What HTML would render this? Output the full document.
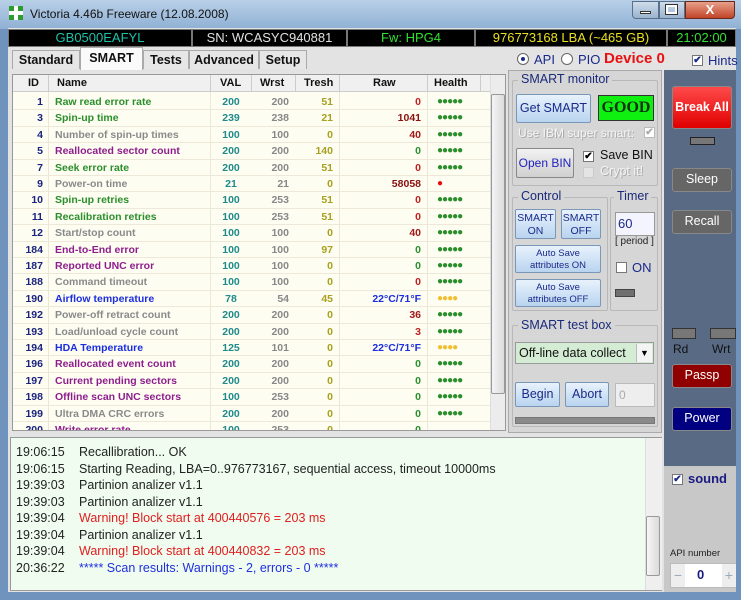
<!DOCTYPE html>
<html><head><meta charset="utf-8"><style>
*{margin:0;padding:0;box-sizing:border-box}
body{width:741px;height:600px;overflow:hidden;background:#6f93bd;font-family:"Liberation Sans",sans-serif;position:relative}
.a{position:absolute}
.title{left:0;top:0;width:741px;height:29px;background:linear-gradient(#b9d0e8,#8fb0d4)}
.client{left:8px;top:28px;width:728px;height:564px;background:#e3e3e3}
.info{top:29px;height:18px;background:#000;border:1px solid #777;font-size:13px;text-align:center;line-height:16px}
.tab{top:50px;height:19px;background:#e6e6e6;border:1px solid #aaa;border-bottom:none;font-size:12.5px;font-weight:bold;text-align:center;line-height:18px;color:#111}
.tbl{left:12px;top:74px;width:494px;height:357px;background:#fdfdf2;border:1px solid #999;overflow:hidden}
.row{position:absolute;left:0;width:478px;height:16.4px;font-size:10.5px;font-weight:bold;line-height:16px;border-bottom:1px solid #eee8d8}
.row span{position:absolute;top:0}
.id{right:448px;color:#1a237e}
.nm{left:42px}
.val{left:196px;width:44px;text-align:center;color:#1f8a8a}
.wr{right:202px;color:#888}
.tr{right:158px;color:#a8a020}
.rw{right:70px}
.hl{left:424px;letter-spacing:-1px;font-size:10px}
.g{color:#2a8f2a}.gy{color:#8a8a8a}.p{color:#8e1e8e}.b{color:#1c2ee0}
.btn{background:linear-gradient(#e8f2fc,#b9d4ef);border:1px solid #7a97b8;border-radius:2px;text-align:center;color:#1a2a8a;font-size:12px;white-space:nowrap}
.grp{border:1px solid #b8b8b8;border-radius:2px}
.gl{background:#d6d6d6;color:#1a2a7a;font-size:12.5px;padding:0 3px}
.dk{border:1px solid #888;border-radius:3px;color:#fff;text-align:center;font-size:12.5px;line-height:21px}
.log{left:10px;top:437px;width:652px;height:154px;background:#effcef;border:1px solid #999;font-size:12.5px;color:#222}
.log div{position:absolute;left:5px;height:16px;white-space:nowrap}
.log i{font-style:normal;position:absolute;left:63px}
.cb{width:11px;height:11px;background:#fff;border:1px solid #777;font-size:10px;line-height:9px;color:#1a2a8a;text-align:center;font-weight:bold}
</style></head><body>
<div class="a title"></div>
<div class="a" style="left:9px;top:6px;width:14px;height:14px;background:#2e9b2e"></div>
<div class="a" style="left:14px;top:6px;width:4px;height:14px;background:#fff"></div>
<div class="a" style="left:9px;top:11px;width:14px;height:4px;background:#fff"></div>
<div class="a" style="left:30px;top:7px;font-size:12px;color:#111">Victoria 4.46b Freeware (12.08.2008)</div>
<div class="a" style="left:632px;top:1px;width:27px;height:18px;background:linear-gradient(#cfdcea,#9bb3cf);border:1px solid #5a6f8a;border-radius:0 0 0 4px"></div>
<div class="a" style="left:640px;top:11px;width:11px;height:3px;background:#fff;border:1px solid #333"></div>
<div class="a" style="left:659px;top:1px;width:26px;height:18px;background:linear-gradient(#cfdcea,#9bb3cf);border:1px solid #5a6f8a"></div>
<div class="a" style="left:666px;top:5px;width:11px;height:9px;border:2px solid #fff;outline:1px solid #333"></div>
<div class="a" style="left:685px;top:1px;width:50px;height:18px;background:linear-gradient(#e8a08a,#c04428);border:1px solid #6a2a1a;border-radius:0 0 4px 0;color:#fff;font-weight:bold;text-align:center;font-size:13px;line-height:16px">X</div>
<div class="a client"></div>
<div class="a info" style="left:8px;width:184px;color:#1bc2a8">GB0500EAFYL</div>
<div class="a info" style="left:192px;width:155px;color:#e0e0e0">SN: WCASYC940881</div>
<div class="a info" style="left:347px;width:128px;color:#30e030">Fw: HPG4</div>
<div class="a info" style="left:475px;width:192px;color:#e8e020">976773168 LBA (~465 GB)</div>
<div class="a info" style="left:667px;width:69px;color:#30e030">21:02:00</div>
<div class="a tab" style="left:12px;width:68px">Standard</div>
<div class="a tab" style="left:80px;top:47px;height:23px;width:63px;background:#fafafa;line-height:21px">SMART</div>
<div class="a tab" style="left:143px;width:46px">Tests</div>
<div class="a tab" style="left:189px;width:70px">Advanced</div>
<div class="a tab" style="left:259px;width:48px">Setup</div>
<div class="a" style="left:517px;top:53px;width:12px;height:12px;border-radius:50%;border:1px solid #666;background:#fff"></div>
<div class="a" style="left:521px;top:57px;width:4px;height:4px;border-radius:50%;background:#1a2a8a"></div>
<div class="a" style="left:534px;top:52px;font-size:13px;color:#1a2a8a">API</div>
<div class="a" style="left:561px;top:53px;width:12px;height:12px;border-radius:50%;border:1px solid #666;background:#fff"></div>
<div class="a" style="left:578px;top:52px;font-size:13px;color:#1a2a8a">PIO</div>
<div class="a" style="left:604px;top:50px;font-size:15px;font-weight:bold;color:#e81010">Device 0</div>
<div class="a cb" style="left:692px;top:55px">✔</div>
<div class="a" style="left:708px;top:53px;font-size:13px;color:#1a2a8a">Hints</div>

<div class="a tbl">
<div class="a" style="left:0;top:0;width:478px;height:17px;background:#f0f0f0;border-bottom:1px solid #ccc;font-size:11px;font-weight:bold;line-height:16px;color:#111">
<span class="a" style="left:15px">ID</span><span class="a" style="left:44px">Name</span><span class="a" style="left:207px">VAL</span><span class="a" style="left:247px">Wrst</span><span class="a" style="left:291px">Tresh</span><span class="a" style="left:360px">Raw</span><span class="a" style="left:421px">Health</span>
<div class="a" style="left:35px;top:0;width:1px;height:17px;background:#ccc"></div><div class="a" style="left:197px;top:0;width:1px;height:17px;background:#ccc"></div><div class="a" style="left:238px;top:0;width:1px;height:17px;background:#ccc"></div><div class="a" style="left:282px;top:0;width:1px;height:17px;background:#ccc"></div><div class="a" style="left:326px;top:0;width:1px;height:17px;background:#ccc"></div><div class="a" style="left:414px;top:0;width:1px;height:17px;background:#ccc"></div><div class="a" style="left:467px;top:0;width:1px;height:17px;background:#ccc"></div>
</div>
<div class="a" style="left:35px;top:17px;width:1px;height:340px;background:#eee6d4"></div>
<div class="a" style="left:197px;top:17px;width:1px;height:340px;background:#eee6d4"></div>
<div class="a" style="left:326px;top:17px;width:1px;height:340px;background:#eee6d4"></div>
<div class="a" style="left:414px;top:17px;width:1px;height:340px;background:#eee6d4"></div>
<div class="row" style="top:19px"><span class="id">1</span><span class="nm g">Raw read error rate</span><span class="val">200</span><span class="wr">200</span><span class="tr">51</span><span class="rw" style="color:#c02020">0</span><span class="hl g">●●●●●</span></div>
<div class="row" style="top:35.4px"><span class="id">3</span><span class="nm g">Spin-up time</span><span class="val">239</span><span class="wr">238</span><span class="tr">21</span><span class="rw" style="color:#8b1010">1041</span><span class="hl g">●●●●●</span></div>
<div class="row" style="top:51.8px"><span class="id">4</span><span class="nm gy">Number of spin-up times</span><span class="val">100</span><span class="wr">100</span><span class="tr">0</span><span class="rw" style="color:#a01818">40</span><span class="hl g">●●●●●</span></div>
<div class="row" style="top:68.2px"><span class="id">5</span><span class="nm p">Reallocated sector count</span><span class="val">200</span><span class="wr">200</span><span class="tr">140</span><span class="rw g">0</span><span class="hl g">●●●●●</span></div>
<div class="row" style="top:84.6px"><span class="id">7</span><span class="nm g">Seek error rate</span><span class="val">200</span><span class="wr">200</span><span class="tr">51</span><span class="rw" style="color:#c02020">0</span><span class="hl g">●●●●●</span></div>
<div class="row" style="top:101px"><span class="id">9</span><span class="nm gy">Power-on time</span><span class="val">21</span><span class="wr">21</span><span class="tr">0</span><span class="rw" style="color:#8b1010">58058</span><span class="hl" style="color:#e01010">●</span></div>
<div class="row" style="top:117.4px"><span class="id">10</span><span class="nm g">Spin-up retries</span><span class="val">100</span><span class="wr">253</span><span class="tr">51</span><span class="rw" style="color:#c02020">0</span><span class="hl g">●●●●●</span></div>
<div class="row" style="top:133.8px"><span class="id">11</span><span class="nm g">Recalibration retries</span><span class="val">100</span><span class="wr">253</span><span class="tr">51</span><span class="rw" style="color:#c02020">0</span><span class="hl g">●●●●●</span></div>
<div class="row" style="top:150.2px"><span class="id">12</span><span class="nm gy">Start/stop count</span><span class="val">100</span><span class="wr">100</span><span class="tr">0</span><span class="rw" style="color:#a01818">40</span><span class="hl g">●●●●●</span></div>
<div class="row" style="top:166.6px"><span class="id">184</span><span class="nm p">End-to-End error</span><span class="val">100</span><span class="wr">100</span><span class="tr">97</span><span class="rw g">0</span><span class="hl g">●●●●●</span></div>
<div class="row" style="top:183px"><span class="id">187</span><span class="nm p">Reported UNC error</span><span class="val">100</span><span class="wr">100</span><span class="tr">0</span><span class="rw g">0</span><span class="hl g">●●●●●</span></div>
<div class="row" style="top:199.4px"><span class="id">188</span><span class="nm gy">Command timeout</span><span class="val">100</span><span class="wr">100</span><span class="tr">0</span><span class="rw" style="color:#c02020">0</span><span class="hl g">●●●●●</span></div>
<div class="row" style="top:215.8px"><span class="id">190</span><span class="nm b">Airflow temperature</span><span class="val">78</span><span class="wr">54</span><span class="tr">45</span><span class="rw b">22°C/71°F</span><span class="hl" style="color:#f0c030">●●●●</span></div>
<div class="row" style="top:232.2px"><span class="id">192</span><span class="nm gy">Power-off retract count</span><span class="val">200</span><span class="wr">200</span><span class="tr">0</span><span class="rw" style="color:#a01818">36</span><span class="hl g">●●●●●</span></div>
<div class="row" style="top:248.6px"><span class="id">193</span><span class="nm gy">Load/unload cycle count</span><span class="val">200</span><span class="wr">200</span><span class="tr">0</span><span class="rw" style="color:#c02020">3</span><span class="hl g">●●●●●</span></div>
<div class="row" style="top:265px"><span class="id">194</span><span class="nm b">HDA Temperature</span><span class="val">125</span><span class="wr">101</span><span class="tr">0</span><span class="rw b">22°C/71°F</span><span class="hl" style="color:#f0c030">●●●●</span></div>
<div class="row" style="top:281.4px"><span class="id">196</span><span class="nm p">Reallocated event count</span><span class="val">200</span><span class="wr">200</span><span class="tr">0</span><span class="rw g">0</span><span class="hl g">●●●●●</span></div>
<div class="row" style="top:297.8px"><span class="id">197</span><span class="nm p">Current pending sectors</span><span class="val">200</span><span class="wr">200</span><span class="tr">0</span><span class="rw g">0</span><span class="hl g">●●●●●</span></div>
<div class="row" style="top:314.2px"><span class="id">198</span><span class="nm p">Offline scan UNC sectors</span><span class="val">100</span><span class="wr">253</span><span class="tr">0</span><span class="rw g">0</span><span class="hl g">●●●●●</span></div>
<div class="row" style="top:330.6px"><span class="id">199</span><span class="nm gy">Ultra DMA CRC errors</span><span class="val">200</span><span class="wr">200</span><span class="tr">0</span><span class="rw g">0</span><span class="hl g">●●●●●</span></div>
<div class="row" style="top:347px"><span class="id">200</span><span class="nm p">Write error rate</span><span class="val">100</span><span class="wr">253</span><span class="tr">0</span><span class="rw g">0</span></div>
<div class="a" style="left:477px;top:0;width:16px;height:357px;background:#ececec;border-left:1px solid #ddd"></div>
<div class="a" style="left:478px;top:19px;width:14px;height:300px;background:linear-gradient(90deg,#f4f4f4,#dcdcdc);border:1px solid #999;border-radius:2px"></div>
</div>

<div class="a" style="left:508px;top:70px;width:154px;height:363px;background:#d6d6d6;border:1px solid #aaa"></div>
<div class="a grp" style="left:512px;top:80px;width:146px;height:106px"></div>
<div class="a gl" style="left:518px;top:72px">SMART monitor</div>
<div class="a btn" style="left:516px;top:94px;width:75px;height:29px;line-height:27px;font-size:12.5px">Get SMART</div>
<div class="a" style="left:598px;top:95px;width:56px;height:26px;background:#10f010;border:1px solid #333;text-align:center;font:bold 16px/24px 'Liberation Serif',serif;color:#103010">GOOD</div>
<div class="a" style="left:518px;top:126px;font-size:12px;color:#f4f4f4;text-shadow:1px 1px #aaa">Use IBM super smart:</div>
<div class="a cb" style="left:644px;top:127px;color:#aaa;border-color:#bbb">✔</div>
<div class="a btn" style="left:516px;top:148px;width:58px;height:30px;line-height:28px;font-size:12px;background:linear-gradient(#f2f2f2,#d0d0d0);border-color:#888;color:#2020c0">Open BIN</div>
<div class="a cb" style="left:583px;top:151px;color:#000">✔</div>
<div class="a" style="left:600px;top:148px;font-size:12.5px;color:#111">Save BIN</div>
<div class="a cb" style="left:583px;top:167px;border-color:#ccc;background:#e4e4e4"></div>
<div class="a" style="left:600px;top:164px;font-size:12.5px;color:#f4f4f4;text-shadow:1px 1px #aaa">Crypt it!</div>
<div class="a grp" style="left:512px;top:197px;width:96px;height:114px"></div>
<div class="a gl" style="left:518px;top:189px">Control</div>
<div class="a grp" style="left:610px;top:197px;width:48px;height:114px"></div>
<div class="a gl" style="left:614px;top:189px">Timer</div>
<div class="a btn" style="left:515px;top:209px;width:41px;height:30px;font-size:10.5px;line-height:13px;padding-top:2px">SMART<br>ON</div>
<div class="a btn" style="left:561px;top:209px;width:40px;height:30px;font-size:10.5px;line-height:13px;padding-top:2px">SMART<br>OFF</div>
<div class="a btn" style="left:515px;top:245px;width:86px;height:28px;font-size:9.5px;line-height:12px;padding-top:2px">Auto Save<br>attributes ON</div>
<div class="a btn" style="left:515px;top:279px;width:86px;height:28px;font-size:9.5px;line-height:12px;padding-top:2px">Auto Save<br>attributes OFF</div>
<div class="a" style="left:615px;top:212px;width:40px;height:24px;background:#f4f4ff;border:1px solid #999;font-size:13px;line-height:22px;padding-left:2px;color:#1a2a8a">60</div>
<div class="a" style="left:615px;top:236px;font-size:10px;color:#222">[ period ]</div>
<div class="a cb" style="left:616px;top:262px"></div>
<div class="a" style="left:632px;top:260px;font-size:13px;color:#1a2a8a">ON</div>
<div class="a" style="left:615px;top:289px;width:20px;height:8px;background:#707070;border:1px solid #444"></div>
<div class="a grp" style="left:512px;top:325px;width:146px;height:102px"></div>
<div class="a gl" style="left:518px;top:318px">SMART test box</div>
<div class="a" style="left:515px;top:342px;width:139px;height:22px;background:#d4ecd4;border:1px solid #999;font-size:12.5px;line-height:20px;padding-left:3px;color:#111">Off-line data collect</div>
<div class="a" style="left:636px;top:344px;width:16px;height:18px;background:#f4f4f4;border-left:1px solid #bbb;font-size:9px;text-align:center;line-height:18px">▼</div>
<div class="a btn" style="left:515px;top:382px;width:45px;height:25px;line-height:23px;font-size:12.5px">Begin</div>
<div class="a btn" style="left:565px;top:382px;width:44px;height:25px;line-height:23px;font-size:12.5px">Abort</div>
<div class="a" style="left:615px;top:383px;width:40px;height:24px;background:#eee;border:1px solid #bbb;font-size:12px;line-height:22px;padding-left:3px;color:#aaa">0</div>
<div class="a" style="left:515px;top:417px;width:140px;height:7px;background:#8a8a8a;border:1px solid #777"></div>

<div class="a" style="left:664px;top:70px;width:72px;height:396px;background:#586a84"></div>
<div class="a dk" style="left:672px;top:86px;width:60px;height:43px;background:linear-gradient(#ff4a4a,#e00000);line-height:41px;font-weight:bold;font-size:12.5px">Break All</div>
<div class="a" style="left:690px;top:137px;width:25px;height:8px;background:#777;border:1px solid #222"></div>
<div class="a dk" style="left:672px;top:168px;width:60px;height:24px;background:#666">Sleep</div>
<div class="a dk" style="left:672px;top:210px;width:60px;height:24px;background:#666">Recall</div>
<div class="a" style="left:672px;top:328px;width:24px;height:11px;background:#777;border:1px solid #333"></div>
<div class="a" style="left:710px;top:328px;width:26px;height:11px;background:#777;border:1px solid #333"></div>
<div class="a" style="left:673px;top:342px;font-size:12px;color:#111">Rd</div>
<div class="a" style="left:712px;top:342px;font-size:12px;color:#111">Wrt</div>
<div class="a dk" style="left:672px;top:364px;width:60px;height:24px;background:#900000">Passp</div>
<div class="a dk" style="left:672px;top:407px;width:60px;height:24px;background:#000080">Power</div>
<div class="a" style="left:664px;top:466px;width:72px;height:126px;background:#c8c8c8"></div>
<div class="a cb" style="left:672px;top:474px">✔</div>
<div class="a" style="left:688px;top:471px;font-size:13px;font-weight:bold;color:#1a1a80">sound</div>
<div class="a" style="left:670px;top:548px;font-size:9.5px;color:#222">API number</div>
<div class="a" style="left:670px;top:563px;width:66px;height:25px;background:#fff;border:1px solid #bbb"></div>
<div class="a" style="left:671px;top:564px;width:14px;height:23px;background:#eee;color:#9ab;text-align:center;font-size:14px;line-height:22px">−</div>
<div class="a" style="left:697px;top:567px;font-size:13px;font-weight:bold;color:#1a1a80">0</div>
<div class="a" style="left:722px;top:564px;width:14px;height:23px;background:#eee;color:#9ab;text-align:center;font-size:14px;line-height:22px">+</div>

<div class="a log">
<div style="top:7px">19:06:15<i>Recallibration... OK</i></div>
<div style="top:23.5px">19:06:15<i>Starting Reading, LBA=0..976773167, sequential access, timeout 10000ms</i></div>
<div style="top:40px">19:39:03<i>Partinion analizer v1.1</i></div>
<div style="top:56.5px">19:39:03<i>Partinion analizer v1.1</i></div>
<div style="top:73px">19:39:04<i style="color:#e02020">Warning! Block start at 400440576 = 203 ms</i></div>
<div style="top:89.5px">19:39:04<i>Partinion analizer v1.1</i></div>
<div style="top:106px">19:39:04<i style="color:#e02020">Warning! Block start at 400440832 = 203 ms</i></div>
<div style="top:122.5px">20:36:22<i style="color:#2030e0">***** Scan results: Warnings - 2, errors - 0 *****</i></div>
<div style="left:634px;top:0;width:17px;height:152px;background:#efefef;border-left:1px solid #ddd"></div>
<div style="left:635px;top:78px;width:14px;height:60px;background:linear-gradient(90deg,#f6f6f6,#dadada);border:1px solid #999;border-radius:2px"></div>
</div>
</body></html>
